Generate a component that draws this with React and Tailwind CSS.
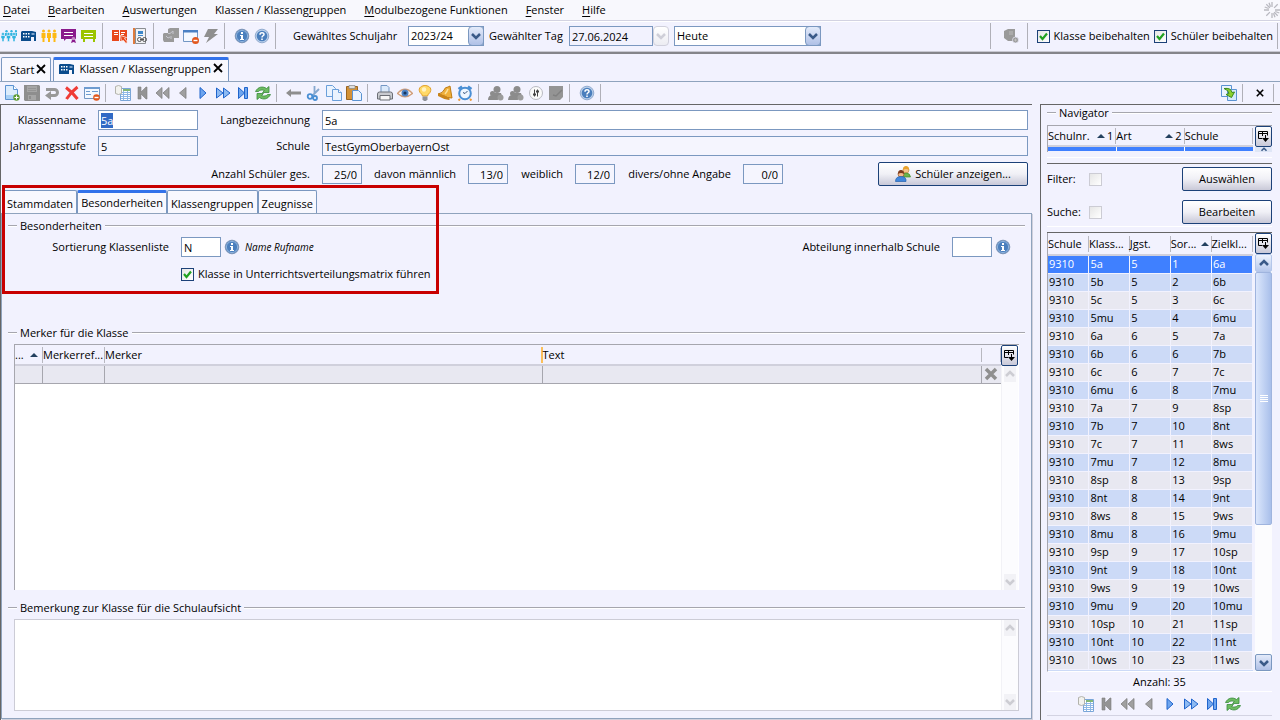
import React, { useEffect, useRef } from 'react';

// Spalten: Schule, Klasse, Jahrgangsstufe, Sortierung, Zielklasse
const klassen = [
  ['9310', '5a', '5', '1', '6a'],
  ['9310', '5b', '5', '2', '6b'],
  ['9310', '5c', '5', '3', '6c'],
  ['9310', '5mu', '5', '4', '6mu'],
  ['9310', '6a', '6', '5', '7a'],
  ['9310', '6b', '6', '6', '7b'],
  ['9310', '6c', '6', '7', '7c'],
  ['9310', '6mu', '6', '8', '7mu'],
  ['9310', '7a', '7', '9', '8sp'],
  ['9310', '7b', '7', '10', '8nt'],
  ['9310', '7c', '7', '11', '8ws'],
  ['9310', '7mu', '7', '12', '8mu'],
  ['9310', '8sp', '8', '13', '9sp'],
  ['9310', '8nt', '8', '14', '9nt'],
  ['9310', '8ws', '8', '15', '9ws'],
  ['9310', '8mu', '8', '16', '9mu'],
  ['9310', '9sp', '9', '17', '10sp'],
  ['9310', '9nt', '9', '18', '10nt'],
  ['9310', '9ws', '9', '19', '10ws'],
  ['9310', '9mu', '9', '20', '10mu'],
  ['9310', '10sp', '10', '21', '11sp'],
  ['9310', '10nt', '10', '22', '11nt'],
  ['9310', '10ws', '10', '23', '11ws'],
];

const menu = [
  ['', 'D', 'atei'],
  ['', 'B', 'earbeiten'],
  ['', 'A', 'uswertungen'],
  ['Klassen / Klasseng', 'r', 'uppen'],
  ['', 'M', 'odulbezogene Funktionen'],
  ['', 'F', 'enster'],
  ['', 'H', 'ilfe'],
];

// Alle Symbole liegen auf einem 16x16-Raster
const glyphs = {
  gruppe: (
    <g fill="#2fb4e0">
      <circle cx="5.5" cy="3.300" r="1.200" />
      <circle cx="10.500" cy="3.300" r="1.200" />
      <circle cx="15" cy="3.300" r="1.200" />
      <path d="M4 5h3v3H4zM9 5h3v3H9zM14 5h2v3h-2z" />
      {[2, 7.500, 13].map((x) => (
        <g key={x} stroke="#f2f2fe" strokeWidth=".5">
          <circle cx={x} cy="6" r="1.500" />
          <path d={`M${x - 2} 7.500h4v3h-1v3h-2v-3h-1z`} />
        </g>
      ))}
    </g>
  ),
  schule: (
    <g>
      <path fill="#0b4c8c" d="M0 4l1-1h10l4 1v9h-2V9h-3v4H0z" />
      <path fill="#fff" d="M2 5h1.500v1.500H2zM4.500 5H6v1.500H4.500zM7 5h1.500v1.500H7zM2 8h1.500v1.500H2zM4.500 8H6v1.500H4.500zM7 8h1.500v1.500H7z" />
      <path fill="#7fa3cc" d="M10.500 5h3v2h-3z" />
    </g>
  ),
  lehrer: (
    <g fill="#fdb913">
      {[2.5, 8, 13.5].map((x) => (
        <g key={x}>
          <circle cx={x} cy="3" r="1.5" />
          <path d={`M${x - 2} 5h4v5h-1v4h-2v-4h-1z`} />
        </g>
      ))}
    </g>
  ),
  zeugnis: (
    <g>
      <path fill="#8a1a8c" d="M0 1h15v10H5l-2 2v-2H0z" />
      <path stroke="#fff" d="M3 4.5h9M3 7.500h9" />
      <circle cx="12.500" cy="11" r="2" fill="#c58ac6" />
      <path fill="#8a1a8c" d="M11 12h3l1 3-2.500-1-2.500 1z" />
    </g>
  ),
  tafel: (
    <g>
      <path fill="#9bc400" d="M0 2h15v9h-1v3h-2v-3H4v3H2v-3H0z" />
      <path stroke="#fff" d="M3 5.500h9M3 8.500h9" />
    </g>
  ),
  buch: (
    <g>
      <path fill="#e8471c" d="M0 2h7v11H0zM8 2h7v11H8z" />
      <path stroke="#fff" d="M2 4.500h4M2 6.500h4M9 4.500h4M9 6.500h3" />
      <path fill="#e8471c" stroke="#fff" strokeWidth=".7" d="M8.500 7.500l6 2-2 1 3 3.500-1.500 1.500-3-3.500-1.500 2z" />
    </g>
  ),
  heft: (
    <g>
      <path fill="#f1f1f4" stroke="#8a8d92" d="M3.500.5h10v15h-10z" />
      <path fill="#e07a3c" d="M1 0h2v16H1z" />
      <path fill="#3d86c9" d="M6 3h5v3H6zM6 7h5v1H6z" />
      <path stroke="#555" fill="none" d="M5.500 11.500a2 2 0 0 1 4 0a2 2 0 0 1-4 0M10.500 11.500a2 2 0 0 1 4 0a2 2 0 0 1-4 0M8 11.500h4" />
    </g>
  ),
  puzzle: (
    <g fill="#9a9a9a">
      <path d="M5 1l2-1h9v10h-5v4H1L0 12V6l1-1h4z" />
      <path stroke="#c6c6ce" fill="none" d="M5 5.500h2l3-2.500M10 3v3M3 8l2 2 2-1M8 11V8" />
    </g>
  ),
  fensterMinus: (
    <g>
      <path fill="#f4f8ff" stroke="#7397c4" d="M.5 2.500h14v11H.5z" />
      <path fill="#4a80c4" d="M0 2h15v2.500H0z" />
      <circle cx="12.500" cy="12.500" r="3.500" fill="#e2571d" />
      <path stroke="#fff" strokeWidth="1.400" d="M10.500 12.500h4" />
    </g>
  ),
  blitz: <path fill="#8f8f8f" d="M5 1h10l-4 5h4L3 15l3-6H1z" />,
  info: (
    <g>
      <circle cx="8" cy="8" r="6.800" fill="#4b7fbd" stroke="#7f96b8" />
      <circle cx="8" cy="8" r="5.600" fill="none" stroke="#9fc0e4" strokeWidth=".8" />
      <path fill="#fff" d="M7 4h2v2H7zM6 7h3v4h1v1H6v-1h1V8H6z" />
    </g>
  ),
  hilfe: (
    <g>
      <circle cx="8" cy="8" r="6.800" fill="#b9cfea" stroke="#92abcf" />
      <circle cx="8" cy="8" r="5.300" fill="#4b7fbd" />
      <path fill="none" stroke="#fff" strokeWidth="1.500" d="M6 6.700c0-2.600 4-2.600 4-.3c0 1.400-2 1.300-2 3" />
      <path fill="#fff" d="M7.200 10.500h1.600V12H7.200z" />
    </g>
  ),
  person: (
    <g fill="#9a9a9a">
      <path d="M1 3l4-2h7v12H5l-4-3z" />
      <circle cx="12.500" cy="12" r="3" stroke="#eef" strokeWidth=".7" />
      <path stroke="#ccc" strokeWidth=".7" d="M6 4h4M6 6h4M11 12h3M12.500 10.500v3" />
    </g>
  ),
  neu: (
    <g>
      <path fill="#dcecfc" stroke="#5b93d2" d="M1.500.5h8l4 4v10h-12z" />
      <path fill="#fff" stroke="#5b93d2" d="M9.500.5v4h4" />
      <path fill="#a9d0f5" d="M2 10h11v4H2z" />
      <circle cx="12.500" cy="12.500" r="3.200" fill="#5c9a32" />
      <path stroke="#fff" d="M10.500 12.500h4M12.500 10.500v4" />
    </g>
  ),
  speichern: (
    <g>
      <path fill="#8e8e8e" d="M0 0h15l1 1v15H1l-1-1z" />
      <path fill="#a6a6a6" d="M3 1h10v6H3zM4 10h8v5H4z" />
      <path stroke="#959595" d="M4 3.500h8M4 5.500h8" />
      <path fill="#8e8e8e" d="M5 11h2v3H5z" />
    </g>
  ),
  zurueck: (
    <g>
      <path fill="none" stroke="#989898" strokeWidth="3" d="M2 4.500h8.500a3 3 0 0 1 0 6H6" />
      <path fill="#989898" d="M7 6v9L1 10.500z" />
    </g>
  ),
  loeschen: <path fill="none" stroke="#ef3b36" strokeWidth="3" d="M2 2.500Q8 7 13.500 14M13.500 2Q7 7 2.500 14" />,
  formular: (
    <g>
      <path fill="#f4f8ff" stroke="#7397c4" d="M.5 2.500h15v11H.5z" />
      <path fill="#6e9bd0" d="M0 2h16v2H0z" />
      <path stroke="#6e9bd0" d="M2 6.500h4M8 6.500h6M2 9.500h5" />
      <circle cx="12.500" cy="12.500" r="3.300" fill="#e2571d" />
      <path stroke="#fff" strokeWidth="1.400" d="M10.500 12.500h4" />
    </g>
  ),
  liste: (
    <g>
      <path fill="#fff" stroke="#7aa6d8" d="M5.500 3.500h10v12h-10z" />
      <path fill="#83b77a" d="M8 4h7v2H8z" />
      <path stroke="#8fb8e6" d="M6 7.500h9M6 9.500h9M6 11.500h9M6 13.500h9M8.500 6v9M12.500 6v9" />
      <path fill="#f2f2ee" stroke="#b3b3ac" d="M.5 1.500q3-2 6 0v7q-3 2-6 0z" />
    </g>
  ),
  erster: <path fill="#949494" stroke="#7d7d7d" strokeWidth=".6" d="M3 2h3v5l5-5h1v12h-1L6 9v5H3z" />,
  schnellZurueck: <path fill="#a0a0a0" stroke="#7d7d7d" strokeWidth=".8" d="M1 8l6-5.500v11zM8 8l6-5.500v11z" />,
  einZurueck: <path fill="#a0a0a0" stroke="#7d7d7d" strokeWidth=".8" d="M4.500 8L11 2.500v11z" />,
  einVor: <path fill="#6ea5ee" stroke="#1f64cc" d="M5 2.500L11 8 5 13.500z" />,
  schnellVor: <path fill="#8dbaf2" stroke="#1f64cc" d="M1.500 3L8 8l-6.500 5zM8.500 3L15 8l-6.500 5z" />,
  letzter: <path fill="#6ea5ee" stroke="#1f64cc" d="M3.500 2.500L9.500 8V2.500h3v11h-3V8l-6 5.500z" />,
  aktualisieren: (
    <g fill="#6dbb62" stroke="#388a3c" strokeWidth=".8">
      <path d="M.5 6.500C3 1.500 8 1 11.500 3.500L14 1.500V7.500H7.500L9.500 5.500C7 4.500 4.500 5 3.500 6.500z" />
      <path d="M15.500 9.500C13 14.500 8 15 4.500 12.500L2 14.500V8.500h6.500L6.500 10.500c2.500 1 5 .5 6-1z" />
    </g>
  ),
  pfeil: <path fill="#8e8e8e" d="M0 8l5-4v2.500h10v3H5V12z" />,
  schere: (
    <g fill="none" stroke="#4a8fd4">
      <path stroke="#86a8cf" strokeWidth="1.800" d="M8.500 1v8M13 4L6 11" />
      <circle cx="4" cy="11.500" r="2.300" strokeWidth="1.800" />
      <circle cx="9" cy="13" r="2" strokeWidth="1.800" />
    </g>
  ),
  kopieren: (
    <g fill="#eaf3fe" stroke="#6a9fda">
      <path d="M.5.5h6l3 3v8h-9z" />
      <path d="M6.500 4.500h6l3 3v8h-9z" />
      <path fill="#fff" d="M12.500 4.500v3h3" />
    </g>
  ),
  einfuegen: (
    <g>
      <path fill="#d39136" stroke="#9a6420" d="M.5 1.500h11v13H.5z" />
      <path fill="#ddd" stroke="#888" strokeWidth=".7" d="M3 .5h6v3H3z" />
      <path fill="#eaf3fe" stroke="#5b93d2" d="M6.500 5.500h6l3 3v7h-9z" />
    </g>
  ),
  drucker: (
    <g>
      <path fill="#dceafb" stroke="#7397c4" d="M4 .5h6l2 2V8H4z" />
      <path fill="#c9cbd0" stroke="#6b6e75" d="M.5 9q0-2 2-2h11q2 0 2 2v5H.5z" />
      <path fill="#f6f6f6" stroke="#6b6e75" d="M3 10.500h10v4.500H3z" />
    </g>
  ),
  auge: (
    <g>
      <path fill="#fdf5f0" stroke="#cf9c78" strokeWidth="1.300" d="M.5 8.500Q8 0 15.500 8.500Q8 15 .5 8.500z" />
      <circle cx="8" cy="8" r="3.500" fill="#4c83c6" />
      <circle cx="8" cy="8" r="1.600" fill="#18365f" />
    </g>
  ),
  lampe: (
    <g>
      <path fill="#ffd968" stroke="#e0a02c" d="M5.500 11Q5 9 3 7.500C0 2 6 .5 8 .5s8 1.500 5 7Q11 9 10.500 11z" />
      <circle cx="7" cy="4.500" r="2.200" fill="#fff3c4" />
      <path fill="#8f9299" d="M5.500 11.500h5v3l-1.500 1.500h-2l-1.500-1.500z" />
    </g>
  ),
  glocke: (
    <g>
      <path fill="#f0b03a" stroke="#bd7a13" d="M13 1l2 12q-5 0-8-2L1 9q5-1 6-4t4-3z" />
      <path fill="#c9851b" d="M1 9q6 0 12 5l-1 1Q6 14 1 11z" />
      <path stroke="#fbe09a" strokeWidth="1.500" fill="none" d="M11 4q-1 3-3 5" />
    </g>
  ),
  wecker: (
    <g>
      <path stroke="#4a8fd4" strokeWidth="2.500" d="M1.500 4L5 1.500M14.500 4L11 1.500" />
      <circle cx="8" cy="8.500" r="5.800" fill="#eef6ff" stroke="#4a8fd4" strokeWidth="2" />
      <path stroke="#f09a35" strokeWidth="2" d="M3 14l-1.500 1.500M13 14l1.500 1.500" />
      <path stroke="#38557c" fill="none" d="M10.500 6L8 8.500 6 7.500" />
    </g>
  ),
  personen: (
    <g fill="#8c8c8c">
      <circle cx="9" cy="4.500" r="3.500" />
      <path d="M4 8h9l2 6H4z" />
      <circle cx="4.500" cy="8.500" r="2.500" />
      <path d="M0 15q0-5 5-5t5 5z" />
      <circle cx="12.500" cy="12.500" r="3" fill="#9c9c9c" />
    </g>
  ),
  regler: (
    <g>
      <circle cx="8" cy="8" r="6.500" fill="#fafafa" stroke="#b9bac2" />
      <path stroke="#444" d="M6.500 4.500v7M9.500 4.500v7" />
      <path fill="#444" d="M5 8.500h3v2H5zM8 5.500h3v2H8z" />
    </g>
  ),
  notiz: (
    <g>
      <path fill="#949494" d="M1 1h14v11l-3 3H1z" />
      <path stroke="#808080" strokeWidth="1.500" d="M5 10l3 1 6-6" fill="none" />
    </g>
  ),
  export: (
    <g>
      <path fill="#eaf4ff" stroke="#5b93d2" d="M.5.5h10v11H.5z" />
      <path fill="#d4e9fb" stroke="#5b93d2" d="M6.500 4.500h9v11h-9z" />
      <path fill="#8ad02d" stroke="#3c8a1e" d="M3 3.500q7-1 8 4l2.500-.5-3 5.500L5 9.500l3-1Q8 5.500 3 3.500z" />
    </g>
  ),
  schueler: (
    <g>
      <circle cx="11" cy="4" r="3" fill="#f6c28b" stroke="#c58a3c" strokeWidth=".7" />
      <path fill="#e9a32c" d="M8 4q0-4 3-4t3 4q-3-2-6 0z" />
      <path fill="#6cb44c" stroke="#3f8a2a" strokeWidth=".7" d="M7 11q0-4 4-4t4.500 4z" />
      <circle cx="6" cy="8" r="3" fill="#f2b98c" stroke="#96562a" strokeWidth=".7" />
      <path fill="#7c3a1c" d="M3 8q0-4 3-4t3 4q-3-2-6 0z" />
      <path fill="#3f86dc" stroke="#2562ae" strokeWidth=".7" d="M.5 15.500q0-5 5.500-5t5 5z" />
    </g>
  ),
};

const Icon = ({ name }) => (
  <svg className="size-4 shrink-0" viewBox="0 0 16 16" fill="none" aria-hidden="true">
    {glyphs[name]}
  </svg>
);

const IconButton = ({ name }) => (
  <button type="button" aria-label={name} className="flex h-5 w-5 items-center justify-center">
    <Icon name={name} />
  </button>
);

const Sep = () => <span className="mr-[7px] ml-[3px] h-full w-px bg-[#b0b0b8]" />;

// Gruppen von Symbolen, jeweils mit Trennstrich danach
const IconGroups = ({ groups }) =>
  groups.map((group) => (
    <React.Fragment key={group[0]}>
      {group.map((name, i) => (
        <IconButton key={i} name={name} />
      ))}
      <Sep />
    </React.Fragment>
  ));

const Chevron = ({ up, className }) => (
  <svg className={className} viewBox="0 0 10 8" fill="none" stroke="currentColor" strokeWidth="2.500" aria-hidden="true">
    <path d={up ? 'M1 6l4-4 4 4' : 'M1 2l4 4 4-4'} />
  </svg>
);

const ArrowBox = ({ disabled }) => (
  <span
    className={`pointer-events-none absolute inset-y-0 right-0 flex w-4 items-center justify-center rounded-sm border bg-linear-to-b ${
      disabled ? 'border-[#d0d0dc] from-white to-[#ececf2] text-[#cfcfd8]' : 'border-[#7b98c0] from-[#e4ebfa] to-[#afc0e6] text-[#3a5a88]'
    }`}
  >
    <Chevron className="h-2 w-2.5" />
  </span>
);

const Combo = ({ id, value, className }) => (
  <span className={`relative h-5 ${className}`}>
    <select id={id} aria-label={value} className="block h-5 w-full appearance-none border border-[#7b98c0] bg-white px-0.5 text-black">
      <option>{value}</option>
    </select>
    <ArrowBox />
  </span>
);

const Check = ({ label, checked, disabled }) => (
  <label className="flex items-center gap-1 whitespace-nowrap">
    <span className="relative block size-[13px]">
      <input
        type="checkbox"
        defaultChecked={checked}
        disabled={disabled}
        aria-label={label || 'aktiv'}
        className={`block size-[13px] appearance-none border bg-linear-to-br from-[#e6e6e6] to-white ${disabled ? 'border-[#ccccd4]' : 'border-[#1c4178]'}`}
      />
      {checked && (
        <svg className="pointer-events-none absolute inset-0 size-[13px]" viewBox="0 0 13 13" fill="none" stroke="#21a121" strokeWidth="2.200" aria-hidden="true">
          <path d="M3 6l2.500 3L10 3.500" />
        </svg>
      )}
    </span>
    {label}
  </label>
);

const fieldBase = 'h-5 border border-[#7b98c0] px-0.5 outline-none';

const Section = ({ title, className = '', children }) => (
  <section className={className}>
    <h2 className="flex h-4 items-center gap-[3px] whitespace-nowrap">
      <span className="h-0.5 w-[9px] border-t border-[#a6a6ae] bg-white" />
      {title}
      <span className="h-0.5 flex-1 border-t border-[#a6a6ae] bg-white" />
    </h2>
    {children}
  </section>
);

const PushButton = ({ className, children }) => (
  <button
    type="button"
    className={`flex h-6 items-center justify-center gap-1 rounded-xs border border-[#1c4178] bg-linear-to-b from-white via-[#f0f0f6] to-[#c9c9d8] ${className}`}
  >
    {children}
  </button>
);

const ColumnButton = () => (
  <button type="button" aria-label="Spalten" className="flex h-[21px] w-[17px] shrink-0 items-center justify-center rounded-xs border border-[#1c4178] bg-linear-to-b from-white to-[#c9c9d8]">
    <svg className="size-[11px]" viewBox="0 0 11 11" fill="none" stroke="#000" aria-hidden="true">
      <path d="M4 7.500H.5v-7h9v4M0 2.500h10M4.500 0v5" />
      <path fill="#000" stroke="none" d="M7 4h1v3h3l-3.500 4L4 7h3z" />
    </svg>
  </button>
);

const SortUp = () => (
  <svg className="h-1 w-2 shrink-0" viewBox="0 0 8 4" aria-hidden="true">
    <path fill="#23405e" d="M0 4l4-4 4 4z" />
  </svg>
);

const PaleScroll = () => (
  <div className="flex w-[17px] shrink-0 flex-1 flex-col items-center justify-between border-l border-[#f2f2f6] bg-[#fcfcfe] text-[#cdcdd3]">
    <span className="flex h-4 w-3 items-center justify-center bg-[#f2f2f6]">
      <Chevron up className="h-2 w-2.5" />
    </span>
    <span className="flex h-4 w-3 items-center justify-center bg-[#f2f2f6]">
      <Chevron className="h-2 w-2.5" />
    </span>
  </div>
);

const Tab = ({ children, active }) => (
  <button
    type="button"
    role="tab"
    aria-selected={!!active}
    className={`flex items-center whitespace-nowrap rounded-t-xs border border-b-0 border-[#7b98c0] bg-[#f8f8fe] px-[3px] ${
      active ? 'border-t-[3px] border-t-[#3272ea]' : 'pt-1'
    }`}
  >
    {children}
  </button>
);

const Close = () => (
  <svg className="mb-0.5 size-2.5" viewBox="0 0 10 10" stroke="#000" strokeWidth="1.800" aria-hidden="true">
    <path d="M1 1l8 8M9 1L1 9" />
  </svg>
);

const MenuBar = () => (
  <nav className="flex h-[21px] items-center border-b border-[#d3d3e2] bg-[#f8f8fd]">
    <ul className="flex flex-1 gap-[18px] pl-[3px]">
      {menu.map(([before, key, after]) => (
        <li key={key}>
          <a href="#menu">
            {before}
            <u className="underline-offset-2">{key}</u>
            {after}
          </a>
        </li>
      ))}
    </ul>
    <svg className="size-4" viewBox="0 0 16 16" stroke="#b9b9c0" strokeWidth="1.300" aria-hidden="true">
      <path d="M8 0v5M8 11v5M0 8h5M11 8h5M2.300 2.300l3.600 3.600M10.100 10.100l3.600 3.600M13.700 2.300l-3.600 3.600M5.900 10.100l-3.600 3.600M5 .7l1.500 4M9.500 11.300l1.500 4M.7 5l4 1.500M11.300 9.500l4 1.500" />
    </svg>
  </nav>
);

const MainToolbar = () => (
  <div className="flex h-[33px] items-center border-t border-b-2 border-t-white border-b-[#85858a] pt-0.5 pb-1 shadow-[inset_0_-1px_0_#c9c9d2]">
    <div className="-ml-px flex h-[26px] items-center">
      <IconGroups
        groups={[
          ['gruppe', 'schule', 'lehrer', 'zeugnis', 'tafel'],
          ['buch', 'heft'],
          ['puzzle', 'fensterMinus', 'blitz'],
          ['info', 'hilfe'],
        ]}
      />
    </div>
    <label htmlFor="schuljahr" className="w-[115px] pl-2.5 whitespace-nowrap">Gewähltes Schuljahr</label>
    <Combo id="schuljahr" value="2023/24" className="ml-2.5 w-[76px]" />
    <label htmlFor="tag" className="w-[85px] pl-[5px] whitespace-nowrap">Gewählter Tag</label>
    <span className="relative mr-[5px] flex h-5 w-[100px] items-center">
      <input id="tag" defaultValue="27.06.2024" className="h-5 w-[84px] border border-[#7b98c0] bg-[#f2f2fe] px-0.5" />
      <ArrowBox disabled />
    </span>
    <Combo id="datum" value="Heute" className="w-[147px]" />
    <div className="ml-auto flex h-[26px] items-center">
      <span className="mr-2.5 h-full w-px bg-[#b0b0b8]" />
      <IconButton name="person" />
      <span className="mr-[9px] ml-1.5 h-full w-px bg-[#b0b0b8]" />
      <div className="flex gap-1">
        <Check label="Klasse beibehalten" checked />
        <Check label="Schüler beibehalten" checked />
      </div>
      <span className="mr-0.5 ml-1 h-full w-px bg-[#b0b0b8]" />
    </div>
  </div>
);

const WindowTabs = () => (
  <div className="flex h-7 items-end gap-0.5 border-b border-[#8fa3bd] pl-px" role="tablist">
    <button type="button" role="tab" aria-selected="false" className="flex h-6 items-center gap-0.5 rounded-t-xs border border-b-0 border-[#7b98c0] bg-[#f8f8fe] px-1 pl-2">
      Start <Close />
    </button>
    <button type="button" role="tab" aria-selected="true" className="flex h-6 items-center gap-0.5 rounded-t-xs border border-t-[3px] border-b-0 border-[#7b98c0] border-t-[#3272ea] bg-[#f8f8fe] px-[5px] pb-1">
      <Icon name="schule" />
      <span className="pl-0.5">Klassen / Klassengruppen</span>
      <Close />
    </button>
  </div>
);

const EditToolbar = () => (
  <div className="flex h-[22px] items-center">
    <div className="flex h-[18px] items-center pl-0.5">
      <IconGroups
        groups={[
          ['neu', 'speichern', 'zurueck', 'loeschen', 'formular'],
          ['liste', 'erster', 'schnellZurueck', 'einZurueck', 'einVor', 'schnellVor', 'letzter', 'aktualisieren'],
          ['pfeil', 'schere', 'kopieren', 'einfuegen'],
          ['drucker', 'auge', 'lampe', 'glocke', 'wecker'],
          ['personen', 'personen', 'regler', 'notiz'],
          ['hilfe'],
        ]}
      />
    </div>
    <div className="ml-auto flex h-[18px] items-center pr-1.5">
      <IconButton name="export" />
      <span className="ml-[3px] h-full w-px bg-[#b0b0b8]" />
      <button type="button" aria-label="Schließen" className="flex w-[30px] justify-center pl-1">
        <svg className="size-2" viewBox="0 0 10 10" stroke="#000" strokeWidth="2" aria-hidden="true">
          <path d="M1 1l8 8M9 1L1 9" />
        </svg>
      </button>
      <span className="h-full w-px bg-[#b0b0b8]" />
    </div>
  </div>
);

const ClassForm = () => {
  const nameRef = useRef(null);

  // Klassenname ist beim Öffnen markiert
  useEffect(() => {
    nameRef.current.focus();
    nameRef.current.select();
  }, []);

  const counts = [
    ['ges', 'Anzahl Schüler ges.', '25/0', 'w-[309px]'],
    ['m', 'davon männlich', '13/0', 'w-[82px]'],
    ['w', 'weiblich', '12/0', 'w-[43px]'],
    ['d', 'divers/ohne Angabe', '0/0', 'w-[104px]'],
  ];

  return (
    <form className="flex flex-col gap-1.5 pt-[5px] pr-1">
      <div className="flex items-center gap-3">
        <label htmlFor="name" className="w-[85px] text-right">Klassenname</label>
        <input id="name" ref={nameRef} defaultValue="5a" className={`${fieldBase} w-[100px] bg-white selection:bg-[#316ac5] selection:text-white`} />
        <label htmlFor="lang" className="w-[100px] text-right whitespace-nowrap">Langbezeichnung</label>
        <input id="lang" defaultValue="5a" className={`${fieldBase} min-w-0 flex-1 bg-white`} />
      </div>
      <div className="flex items-center gap-3">
        <label htmlFor="stufe" className="w-[85px] text-right">Jahrgangsstufe</label>
        <input id="stufe" readOnly value="5" className={`${fieldBase} w-[100px] bg-[#f5f5fe]`} />
        <label htmlFor="schule" className="w-[100px] text-right">Schule</label>
        <input id="schule" readOnly value="TestGymOberbayernOst" className={`${fieldBase} min-w-0 flex-1 bg-[#f5f5fe]`} />
      </div>
      <div className="flex h-6 items-center gap-3">
        {counts.map(([id, label, value, width]) => (
          <React.Fragment key={id}>
            <label htmlFor={id} className={`text-right whitespace-nowrap ${width}`}>{label}</label>
            <input id={id} readOnly value={value} className={`${fieldBase} w-10 bg-[#f5f5fe] pr-1 text-right`} />
          </React.Fragment>
        ))}
        <PushButton className="ml-auto w-[150px]">
          <Icon name="schueler" />
          Schüler anzeigen...
        </PushButton>
      </div>
    </form>
  );
};

const MerkerTable = () => (
  <div className="mr-[6px] ml-1.5 flex h-[246px] border-t border-l border-[#a6a6ae] bg-white">
    <div className="min-w-0 flex-1">
      <table className="w-full table-fixed border-collapse">
        <colgroup>
          <col className="w-[27px]" />
          <col className="w-[62px]" />
          <col />
          <col />
          <col className="w-5" />
        </colgroup>
        <thead>
          <tr className="h-5 border-b-2 border-[#d0d0dc] bg-[#f2f2fe] text-left">
            <th className="p-0 font-normal"><span className="flex items-center justify-between pr-1">... <SortUp /></span></th>
            <th className="p-0 font-normal whitespace-nowrap"><span className="block border-l border-[#b8b8c0]">Merkerref...</span></th>
            <th className="p-0 font-normal"><span className="block border-r-2 border-l border-l-[#b8b8c0] border-r-[#fbbf5a]">Merker</span></th>
            <th className="p-0 font-normal"><span className="block">Text</span></th>
            <th className="p-0"><span className="block h-3.5 border-x border-[#b8b8c0]" /></th>
          </tr>
        </thead>
        <tbody>
          <tr className="h-[18px] border-b border-[#a6a6ae] bg-[#e8e8f1]">
            <td className="p-0" />
            <td className="border-l border-[#a6a6ae] p-0" />
            <td className="border-l border-[#a6a6ae] p-0" />
            <td className="border-l border-[#a6a6ae] p-0" />
            <td className="border-l border-[#a6a6ae] p-0">
              <button type="button" aria-label="Entfernen" className="flex h-4 w-full items-center justify-center">
                <svg className="size-3.5" viewBox="0 0 14 14" stroke="#8f8f8f" strokeWidth="3.500" aria-hidden="true">
                  <path d="M2 2l10 10M12 2L2 12" />
                </svg>
              </button>
            </td>
          </tr>
        </tbody>
      </table>
    </div>
    <div className="flex w-[18px] flex-col items-start">
      <ColumnButton />
      <PaleScroll />
    </div>
  </div>
);

const DetailTabs = () => (
  <div className="relative mt-1 flex flex-1 flex-col">
    <div className="flex h-[23px] pl-0.5" role="tablist">
      <Tab>Stammdaten</Tab>
      <Tab active>Besonderheiten</Tab>
      <Tab>Klassengruppen</Tab>
      <Tab>Zeugnisse</Tab>
    </div>
    <div className="flex flex-1 flex-col border border-[#8fa3bd] px-1.5 shadow-[1px_1px_0_#d0d0dc]">
      <Section title="Besonderheiten" className="h-[107px] pt-1">
        <div className="flex h-[26px] items-center pr-3.5">
          <label htmlFor="sort" className="w-[161px] text-right whitespace-nowrap">Sortierung Klassenliste</label>
          <input id="sort" defaultValue="N" className={`${fieldBase} ml-3 w-10 bg-white`} />
          <span className="mx-[3px] flex"><Icon name="info" /></span>
          <em className="ml-0.5 text-[10px]">Name Rufname</em>
          <label htmlFor="abt" className="mr-3 ml-auto">Abteilung innerhalb Schule</label>
          <input id="abt" className={`${fieldBase} mr-[3px] w-10 bg-white`} />
          <Icon name="info" />
        </div>
        <div className="pt-1.5 pl-[173px]">
          <Check label="Klasse in Unterrichtsverteilungsmatrix führen" checked />
        </div>
      </Section>
      <Section title="Merker für die Klasse" className="pt-1">
        <div className="pt-[3px]"><MerkerTable /></div>
      </Section>
      <Section title="Bemerkung zur Klasse für die Schulaufsicht" className="flex flex-1 flex-col pt-2.5">
        <div className="mt-[3px] mr-1.5 mb-[7px] ml-1.5 flex flex-1 border border-[#ccccd6] bg-white">
          <textarea aria-label="Bemerkung" className="min-w-0 flex-1 resize-none" />
          <div className="flex w-[17px] flex-col"><PaleScroll /></div>
        </div>
      </Section>
    </div>
    {/* Roter Rahmen als Hervorhebung */}
    <div className="pointer-events-none absolute -top-[5px] left-px h-[109px] w-[437px] border-[3px] border-[#c80000]" />
  </div>
);

const Navigator = () => (
  <aside className="flex w-[240px] shrink-0 flex-col border-t border-l border-[#666] pr-2 pl-1.5">
    <Section title="Navigator">
      <div className="mt-1 flex h-[27px] overflow-hidden border-t border-l border-[#a6a6ae]">
        <div className="min-w-0 flex-1">
          <table className="w-full table-fixed border-collapse">
            <thead>
              <tr className="h-5 border-b-2 border-[#d0d0dc] text-left">
                <th className="p-0 font-normal"><span className="flex items-center border-r border-[#b8b8c0]"><span className="flex-1">Schulnr.</span><SortUp /><span className="px-0.5">1</span></span></th>
                <th className="p-0 font-normal"><span className="flex items-center border-r border-[#b8b8c0]"><span className="flex-1">Art</span><SortUp /><span className="px-0.5">2</span></span></th>
                <th className="p-0 font-normal"><span className="block border-r border-[#b8b8c0]">Schule</span></th>
              </tr>
            </thead>
            <tbody>
              <tr className="h-[5px] bg-[#3f80ff]">
                <td className="border-r border-white p-0" />
                <td className="border-r border-white p-0" />
                <td className="p-0" />
              </tr>
            </tbody>
          </table>
        </div>
        <div className="ml-0.5 flex w-[17px] flex-col">
          <ColumnButton />
          <span className="flex h-[5px] items-center justify-center bg-[#dfe6f6] text-[#3a5a88]"><Chevron up className="h-[5px] w-2" /></span>
        </div>
      </div>
    </Section>
    <div className="mt-[5px] h-[7px] border-t border-b border-t-white border-b-[#666]" />
    <div className="flex h-[30px] items-center">
      <span className="w-[42px]">Filter:</span>
      <Check disabled />
      <PushButton className="ml-auto w-[90px]">Auswählen</PushButton>
    </div>
    <div className="flex h-9 items-center">
      <span className="w-[42px]">Suche:</span>
      <Check disabled />
      <PushButton className="ml-auto w-[90px]">Bearbeiten</PushButton>
    </div>
    <div className="-mt-1 h-[7px] border-t border-b border-t-white border-b-[#666]" />
    <div className="flex h-[439px] overflow-hidden border-l border-b border-[#a6a6ae] border-b-white">
      <div className="min-w-0 flex-1 overflow-hidden">
        <table className="w-full table-fixed border-collapse">
          <thead>
            <tr className="h-[22px] border-b-2 border-[#d0d0dc] text-left">
              {['Schule', 'Klass...', 'Jgst.', 'Sor...', 'Zielkl...'].map((h) => (
                <th key={h} className="p-0 font-normal whitespace-nowrap">
                  <span className="flex items-center justify-between border-r border-[#b8b8c0] pr-0.5">
                    {h}
                    {h === 'Sor...' && <SortUp />}
                  </span>
                </th>
              ))}
            </tr>
          </thead>
          <tbody>
            {klassen.map((row, i) => (
              <tr key={row[1]} className={`h-[18px] ${i === 0 ? 'bg-[#3f80ff] text-white' : i % 2 ? 'bg-[#ccdaf7]' : 'bg-[#e8e8f1]'}`}>
                {row.map((cell, j) => (
                  <td key={j} className="border-r border-b border-[#f2f2fe] px-px py-0">{cell}</td>
                ))}
              </tr>
            ))}
            <tr className="h-[18px] bg-[#ccdaf7]">
              <td colSpan={5} />
            </tr>
          </tbody>
        </table>
      </div>
      <div className="ml-0.5 flex w-[17px] flex-col">
        <ColumnButton />
        <div className="flex flex-1 flex-col bg-[#fcfcfe] text-[#3a5a88]">
          <span className="flex h-[18px] items-center justify-center rounded-xs border border-[#b4c6ea] bg-linear-to-b from-[#eef3fd] to-[#b7c8ec]">
            <Chevron up className="h-2 w-2.5" />
          </span>
          <span className="flex h-[253px] flex-col items-center justify-center gap-px rounded-xs border border-[#9fb4de] bg-linear-to-r from-[#dce7fc] to-[#a9bfea]">
            <span className="h-px w-2 bg-white" />
            <span className="h-px w-2 bg-white" />
            <span className="h-px w-2 bg-white" />
            <span className="h-px w-2 bg-white" />
          </span>
          <span className="mt-auto flex h-[17px] items-center justify-center rounded-xs border border-[#7b98c0] bg-linear-to-b from-[#e4ebfa] to-[#afc0e6]">
            <Chevron className="h-2 w-2.5" />
          </span>
        </div>
      </div>
    </div>
    <p className="flex h-5 items-center justify-center border-b border-white">Anzahl: 35</p>
    <div className="flex h-6 items-center justify-center gap-px border-b border-[#d3d3e2]">
      {['liste', 'erster', 'schnellZurueck', 'einZurueck', 'einVor', 'schnellVor', 'letzter', 'aktualisieren'].map((name) => (
        <IconButton key={name} name={name} />
      ))}
    </div>
  </aside>
);

export default function App() {
  return (
    <div className="flex min-h-screen flex-col bg-[#f2f2fe] font-['Open_Sans','Noto_Sans',sans-serif] text-[11px] leading-4 text-black">
      <MenuBar />
      <MainToolbar />
      <WindowTabs />
      <EditToolbar />
      <div className="flex flex-1 gap-2">
        <main className="flex min-w-0 flex-1 flex-col border-t border-l border-[#666] pb-px">
          <ClassForm />
          <DetailTabs />
        </main>
        <Navigator />
      </div>
    </div>
  );
}
